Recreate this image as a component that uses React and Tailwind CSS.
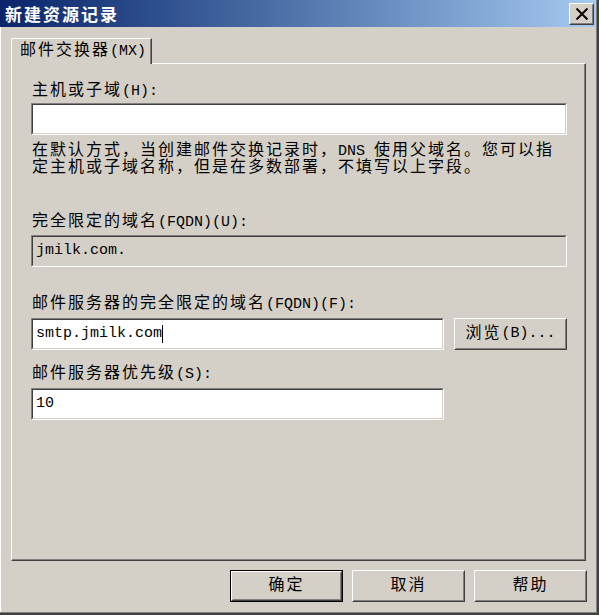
import React from 'react';

// split CJK runs from latin runs so each gets its own pitch
const CJK = /([\u2e80-\u9fff\u3000-\u303f\uff00-\uffef]+)/;

function T({ text }) {
  return text
    .split(CJK)
    .filter(Boolean)
    .map((s, i) =>
      CJK.test(s) ? (
        <span key={i} className="text-[16px] tracking-[2px]">{s}</span>
      ) : (
        <span key={i}>{s}</span>
      )
    );
}

function Label({ text, className = '' }) {
  return (
    <div className={`h-[20px] leading-[20px] pl-px whitespace-nowrap ${className}`}>
      <T text={text} />
    </div>
  );
}

function Field({ width, disabled, children, className = '' }) {
  return (
    <div className={`${width} h-[32px] border border-t-[#808080] border-l-[#808080] border-b-white border-r-white ${className}`}>
      <div
        className={`h-full flex items-center pl-[3px] border border-t-[#404040] border-l-[#404040] border-b-[#d4d0c8] border-r-[#d4d0c8] ${
          disabled ? 'bg-[#d4d0c8]' : 'bg-white'
        }`}
      >
        {children}
      </div>
    </div>
  );
}

function Button({ text, isDefault }) {
  const face = (
    <div className="h-full border border-t-white border-l-white border-b-[#404040] border-r-[#404040]">
      <div className="h-full flex items-center justify-center border border-t-[#d4d0c8] border-l-[#d4d0c8] border-b-[#808080] border-r-[#808080]">
        <T text={text} />
      </div>
    </div>
  );
  if (isDefault) {
    return <div className="w-[113px] h-[32px] border border-black">{face}</div>;
  }
  return <div className="w-[113px] h-[32px]">{face}</div>;
}

export default function App() {
  return (
    <div className="w-[599px] h-[615px] bg-[#404040] overflow-hidden text-black text-[15px] font-['Liberation_Mono','Noto_Sans_CJK_SC',monospace]">
      <div className="w-[597px] h-[613px] bg-[#d4d0c8] border-r border-b border-r-[#808080] border-b-[#808080] flex flex-col">
        {/* Title bar */}
        <div className="h-[27px] flex items-center justify-between bg-linear-to-r from-[#0a246a] to-[#a6caf0] pl-[5px] pr-[2px]">
          <span className="text-white font-bold text-[17px] tracking-[2px] font-['Noto_Sans_CJK_SC',sans-serif] leading-none">
            新建资源记录
          </span>
          <div className="w-[25px] h-[22px] mt-[1px] bg-[#d4d0c8] border border-t-white border-l-white border-b-[#404040] border-r-[#404040]">
            <div className="h-full flex items-center justify-center border border-t-[#d4d0c8] border-l-[#d4d0c8] border-b-[#808080] border-r-[#808080]">
              <svg width="14" height="12" viewBox="0 0 14 12">
                <path d="M1.5 0.5 L12.5 11.5 M12.5 0.5 L1.5 11.5" stroke="black" strokeWidth="2" />
              </svg>
            </div>
          </div>
        </div>

        {/* Body */}
        <div className="flex-1 border-l border-l-white pl-[10px] pt-[11px]">
          {/* Tab */}
          <div className="relative z-10 w-[141px] h-[26px] -mb-px bg-[#d4d0c8] rounded-tl-[2px] border-t border-l border-t-white border-l-white border-r border-r-[#404040]">
            <div className="h-full pl-[8px] pt-[2px] border-r border-r-[#808080] leading-[20px] whitespace-nowrap">
              <T text="邮件交换器(MX)" />
            </div>
          </div>

          {/* Tab panel */}
          <div className="w-[575px] h-[498px] border-t border-l border-t-white border-l-white border-r border-b border-r-[#404040] border-b-[#404040]">
            <div className="h-full pl-[19px] border-r border-b border-r-[#808080] border-b-[#808080] flex flex-col">
              <Label text="主机或子域(H):" className="mt-[17px]" />
              <Field width="w-[536px]" className="mt-[2px]" />

              <div className="mt-[8px] leading-[17px] pl-px whitespace-nowrap">
                <div><T text="在默认方式，当创建邮件交换记录时，DNS 使用父域名。您可以指" /></div>
                <div><T text="定主机或子域名称，但是在多数部署，不填写以上字段。" /></div>
              </div>

              <Label text="完全限定的域名(FQDN)(U):" className="mt-[35px]" />
              <Field width="w-[536px]" disabled className="mt-[3px]">
                <span>jmilk.com.</span>
              </Field>

              <Label text="邮件服务器的完全限定的域名(FQDN)(F):" className="mt-[27px]" />
              <div className="mt-[4px] flex gap-[10px]">
                <Field width="w-[413px]">
                  <span>smtp.jmilk.com</span>
                  <span className="w-px h-[18px] bg-black" />
                </Field>
                <Button text="浏览(B)..." />
              </div>

              <Label text="邮件服务器优先级(S):" className="mt-[14px]" />
              <Field width="w-[413px]" className="mt-[4px]">
                <span>10</span>
              </Field>
            </div>
          </div>

          {/* Buttons */}
          <div className="w-[576px] mt-[9px] flex justify-end gap-[9px]">
            <Button text="确定" isDefault />
            <Button text="取消" />
            <Button text="帮助" />
          </div>
        </div>
      </div>
    </div>
  );
}
